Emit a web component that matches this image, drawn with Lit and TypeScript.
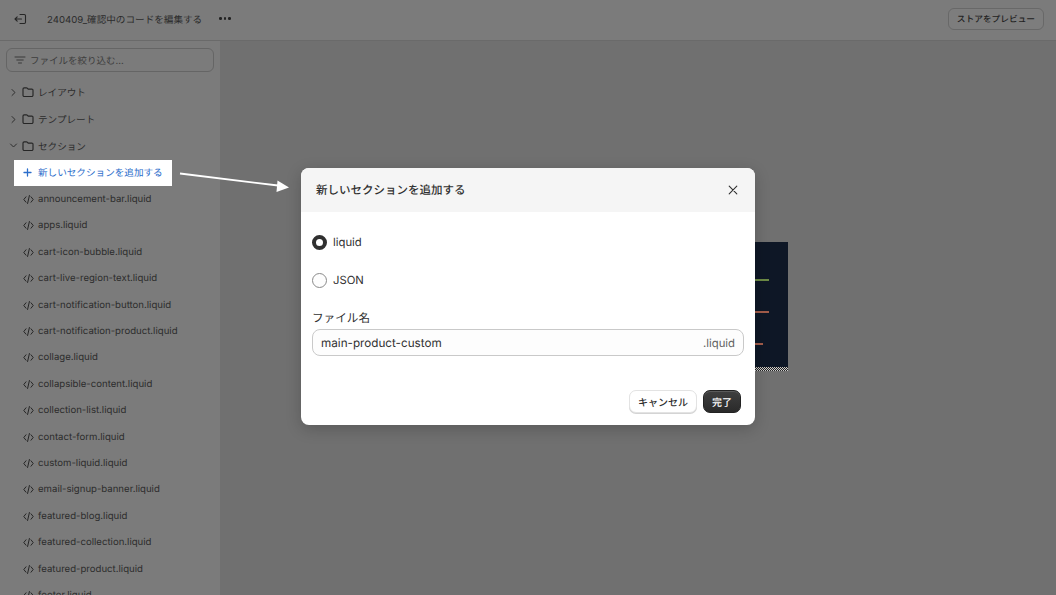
import { LitElement, html, css, svg } from "lit";
import { customElement } from "lit/decorators.js";

const files = [
  "announcement-bar", "apps", "cart-icon-bubble", "cart-live-region-text",
  "cart-notification-button", "cart-notification-product", "collage",
  "collapsible-content", "collection-list", "contact-form", "custom-liquid",
  "email-signup-banner", "featured-blog", "featured-collection",
  "featured-product", "footer",
];

const chevRight = svg`<path d="M6 4.500l3 3-3 3" fill="none" stroke="#2e2e2e" stroke-width="1" stroke-linecap="round" stroke-linejoin="round"/>`;
const chevDown = svg`<path d="M4.500 6l3 3 3-3" fill="none" stroke="#2e2e2e" stroke-width="1" stroke-linecap="round" stroke-linejoin="round"/>`;
const folder = html`<svg class="ico" viewBox="0 0 14 14" width="14" height="14"><path d="M2 4a1.2 1.2 0 0 1 1.2-1.2h2.3c.4 0 .7.2 1 .5l.7.8h3.6A1.2 1.2 0 0 1 12 5.300v4.900a1.300 1.300 0 0 1-1.300 1.300H3.300A1.300 1.300 0 0 1 2 10.200z" fill="none" stroke="#262626" stroke-width="1.150"/></svg>`;

@customElement("app-root")
export class AppRoot extends LitElement {
  static styles = css`
    :host {
      display: block;
      width: 1056px;
      height: 595px;
      overflow: hidden;
      position: relative;
      background: #707070;
      font-family: Inter, "Noto Sans CJK JP", sans-serif;
      color: #262626;
      text-rendering: geometricPrecision;
    }
    .top {
      height: 41px;
      box-sizing: border-box;
      background: #7b7b7b;
      border-bottom: 1px solid #6a6a6a;
      display: flex;
      align-items: center;
      padding: 0 12px 3px 14px;
      font-size: 9.600px;
    }
    .exit { margin-right: 19px; display: flex; }
    .title { color: #2c2c2c; }
    .dots { margin-left: 17px; display: flex; gap: 2px; }
    .dots i { width: 2.500px; height: 2.500px; border-radius: 50%; background: #222; }
    .preview {
      margin-left: auto;
      height: 20px;
      padding: 0 8px;
      display: flex;
      align-items: center;
      border: 1px solid #686868;
      border-radius: 6px;
      font-size: 8.700px;
      font-weight: 500;
      color: #222;
      background: #7d7d7d;
    }
    .body { display: flex; height: 554px; }
    .side {
      width: 220px;
      flex: none;
      background: #7b7b7b;
      padding: 7px 6px 0;
      box-sizing: border-box;
      overflow: hidden;
    }
    .search {
      height: 24px;
      box-sizing: border-box;
      width: 208px;
      border: 1px solid #656565;
      border-radius: 6px;
      display: flex;
      align-items: center;
      gap: 4px;
      padding: 0 7px;
      font-size: 9.500px;
      color: #3e3e3e;
      margin-bottom: 7px;
    }
    .row {
      height: 26.400px;
      display: flex;
      align-items: center;
      font-size: 9.600px;
      color: #2c2c2c;
      white-space: nowrap;
    }
    .row.folder { height: 26.800px; }
    .folder .chev { display: flex; }
    .folder .ico { margin-right: 3px; }
    .file { padding-left: 17px; gap: 4px; }
    .row.add {
      height: 27px;
      padding: 0 0 1px 17px;
      box-sizing: border-box;
      gap: 6px;
      color: #2c6ecb;
      position: relative;
      z-index: 1;
    }
    .add .hl {
      position: absolute;
      left: 8px;
      top: 0.6px;
      width: 158px;
      height: 26px;
      background: #fff;
      z-index: -1;
    }
    .main { flex: 1; position: relative; }
    .thumb {
      position: absolute;
      left: 480px;
      top: 201px;
      width: 88px;
      height: 127px;
      background: #0e1726;
    }
    .thumb b { position: absolute; height: 1.500px; left: 0; }
    .thumb .checker {
      position: absolute;
      left: 0;
      right: 0;
      bottom: -2px;
      height: 4px;
      background: repeating-conic-gradient(#222 0 25%, #ccc 0 50%) 0 0 / 2px 2px;
    }
    .arrow { position: absolute; left: 178px; top: 170px; }
    .dialog {
      position: absolute;
      left: 301px;
      top: 168px;
      width: 454px;
      height: 257px;
      background: #fff;
      border-radius: 8px;
      overflow: hidden;
      box-shadow: 0 4px 16px rgba(0, 0, 0, 0.2);
      display: flex;
      flex-direction: column;
    }
    .dh {
      height: 44px;
      background: #f5f5f5;
      flex: none;
      display: flex;
      align-items: center;
      justify-content: space-between;
      padding: 0 16px 0 15px;
      box-sizing: border-box;
      font-size: 11.500px;
      font-weight: 500;
      color: #303030;
    }
    .dh svg { display: block; }
    .db { padding: 11px 11px 0 11px; flex: 1; }
    .radio {
      height: 38px;
      display: flex;
      align-items: center;
      gap: 6px;
      font-size: 11.300px;
      color: #303030;
    }
    .dot {
      width: 15px;
      height: 15px;
      box-sizing: border-box;
      border-radius: 50%;
      border: 1px solid #8a8a8a;
      background: #fdfdfd;
    }
    .dot.on { border: 4.500px solid #303030; background: #fff; }
    .lab { font-size: 11.600px; color: #303030; margin-top: 11px; height: 17px; line-height: 17px; }
    .field {
      margin-top: 2px;
      height: 27px;
      box-sizing: border-box;
      border: 1px solid #c9c9c9;
      border-radius: 8px;
      background: #fdfdfd;
      display: flex;
      align-items: center;
      justify-content: space-between;
      padding: 0 8px;
      font-size: 11.700px;
      color: #303030;
    }
    .field span:last-child { color: #616161; font-size: 11.300px; }
    .foot {
      display: flex;
      justify-content: flex-end;
      align-items: center;
      gap: 6px;
      padding: 0 14px 12px 0;
    }
    .btn {
      height: 23px;
      box-sizing: border-box;
      display: flex;
      align-items: center;
      padding: 0 8px;
      border-radius: 7px;
      font-size: 10px;
      font-weight: 500;
      color: #303030;
      background: #fff;
      border: 1px solid #e3e3e3;
      box-shadow: 0 1px 0 #d4d4d4;
    }
    .btn.pri {
      background: linear-gradient(#3f3f3f, #2a2a2a);
      color: #fff;
      border-color: #222;
      box-shadow: inset 0 1px 0 #5a5a5a;
    }
  `;

  render() {
    return html`
      <div class="top">
        <span class="exit"><svg width="14" height="14" viewBox="0 0 14 14"><path d="M6 2.500h4.300c.7 0 1.200.5 1.200 1.200v6.600c0 .7-.5 1.200-1.200 1.200H6M1 7h6.500M3.200 4.800 1 7l2.200 2.200" fill="none" stroke="#262626" stroke-width="1.100" stroke-linecap="round" stroke-linejoin="round"/></svg></span>
        <span class="title">240409_確認中のコードを編集する</span>
        <span class="dots"><i></i><i></i><i></i></span>
        <span class="preview">ストアをプレビュー</span>
      </div>
      <div class="body">
        <div class="side">
          <div class="search">
            <svg width="12" height="12" viewBox="0 0 12 12"><path d="M1 3h10M2.800 6h6.400M4.500 9h3" stroke="#3a3a3a" stroke-width="1" stroke-linecap="round"/></svg>
            ファイルを絞り込む...
          </div>
          <div class="row folder"><span class="chev"><svg width="15" height="15" viewBox="0 0 15 15">${chevRight}</svg></span>${folder}レイアウト</div>
          <div class="row folder"><span class="chev"><svg width="15" height="15" viewBox="0 0 15 15">${chevRight}</svg></span>${folder}テンプレート</div>
          <div class="row folder"><span class="chev"><svg width="15" height="15" viewBox="0 0 15 15">${chevDown}</svg></span>${folder}セクション</div>
          <div class="row add">
            <span class="hl"></span>
            <svg width="9" height="9" viewBox="0 0 9 9"><path d="M4.500 1v7M1 4.500h7" stroke="#2c6ecb" stroke-width="1.300" stroke-linecap="round"/></svg>
            新しいセクションを追加する
          </div>
          ${files.map(
            (f) => html`<div class="row file">
              <svg width="11" height="11" viewBox="0 0 11 11"><path d="M3 2.800.8 5.500 3 8.200M8 2.800l2.200 2.700L8 8.200M6.400 1.500 4.600 9.500" fill="none" stroke="#262626" stroke-width="1" stroke-linecap="round" stroke-linejoin="round"/></svg>
              ${f}.liquid
            </div>`
          )}
        </div>
        <div class="main">
          <div class="thumb">
            <b style="top:37px;width:69px;background:#6c8a45"></b>
            <b style="top:69px;width:69px;background:#a25c4a"></b>
            <b style="top:101px;width:63px;background:#a25c4a"></b>
            <span class="checker"></span>
          </div>
        </div>
      </div>
      <svg class="arrow" width="114" height="24" viewBox="0 0 114 24"><path d="M2 3.500 100 15.500" stroke="#fff" stroke-width="1.800"/><path d="M111 17.500 98.500 22 99.500 10.500z" fill="#fff"/></svg>
      <div class="dialog">
        <div class="dh">
          <span>新しいセクションを追加する</span>
          <svg width="12" height="12" viewBox="0 0 12 12"><path d="M2.200 2.200l7.600 7.600M9.800 2.200l-7.600 7.600" stroke="#303030" stroke-width="1.100" stroke-linecap="round"/></svg>
        </div>
        <div class="db">
          <div class="radio"><span class="dot on"></span>liquid</div>
          <div class="radio"><span class="dot"></span>JSON</div>
          <div class="lab">ファイル名</div>
          <div class="field"><span>main-product-custom</span><span>.liquid</span></div>
        </div>
        <div class="foot">
          <span class="btn">キャンセル</span>
          <span class="btn pri">完了</span>
        </div>
      </div>
    `;
  }
}
